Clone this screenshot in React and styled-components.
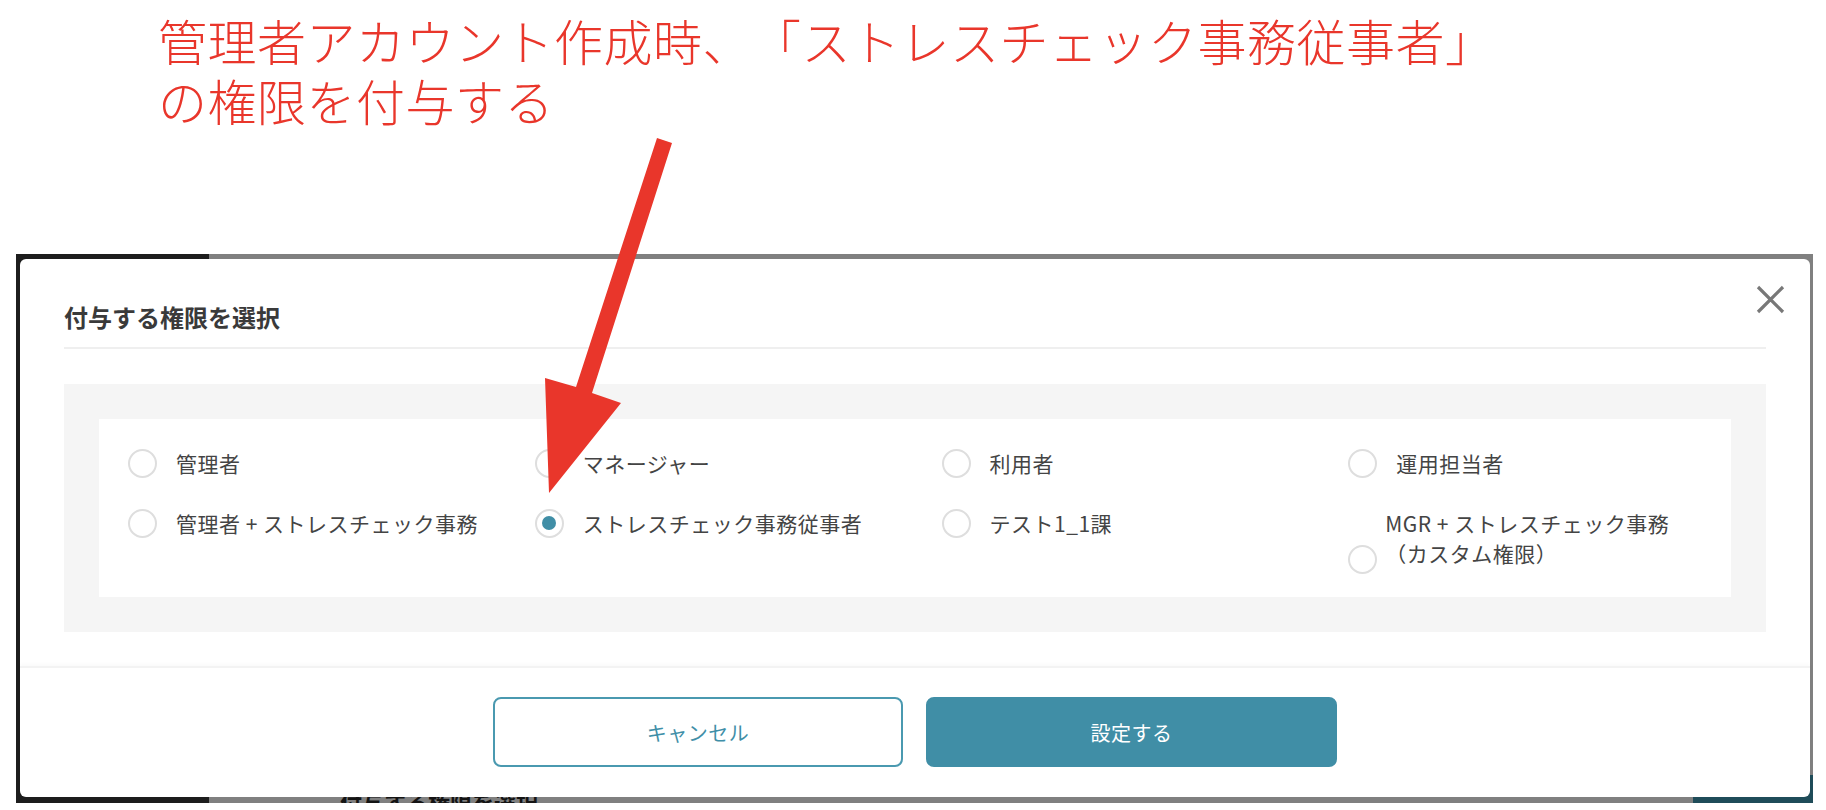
import React, { useState } from 'react';
import styled, { createGlobalStyle } from 'styled-components';

const GlobalStyle = createGlobalStyle`
  * {
    box-sizing: border-box;
  }

  html,
  body {
    margin: 0;
    padding: 0;
    background: #fff;
  }

  body {
    font-family: "Noto Sans CJK JP", "Noto Sans", sans-serif;
    text-spacing-trim: space-all;
  }
`;

// Page + annotation
const Page = styled.div`
  position: relative;
  width: 1826px;
  height: 810px;
  overflow: hidden;
  background: #fff;
`;

const Annotation = styled.p`
  margin: 0;
  height: 254px;
  padding: 10px 0 0 158px;
  font-size: 49px;
  line-height: 59.5px;
  letter-spacing: 0.5px;
  font-weight: 300;
  color: #e9362b;
  text-spacing-trim: space-all;
`;

const ArrowLayer = styled.svg`
  position: absolute;
  top: 0;
  left: 0;
  pointer-events: none;
`;

// The dimmed page behind the dialog
const Backdrop = styled.div`
  position: relative;
  width: 1797px;
  height: 549px;
  margin-left: 16px;
  padding: 5px 3px 6px 4px;
  overflow: hidden;
  background: linear-gradient(to right, #1d1d1d 193px, #808080 193px);
`;

const BehindLabel = styled.span`
  position: absolute;
  left: 324px;
  top: 534px;
  font-size: 22px;
  line-height: 26px;
  font-weight: 700;
  color: #141414;
`;

const BehindButton = styled.div`
  position: absolute;
  right: 0;
  bottom: 0;
  width: 120px;
  height: 28px;
  background: #1f4c59;
`;

// Dialog
const Modal = styled.div`
  position: relative;
  display: flex;
  flex-direction: column;
  height: 100%;
  background: #fff;
  border-radius: 6px;
`;

const Header = styled.div`
  padding: 40px 44px 0;
`;

const Title = styled.h2`
  margin: 0;
  padding-bottom: 12px;
  border-bottom: 2px solid #efefef;
  font-size: 24px;
  line-height: 36px;
  font-weight: 700;
  color: #3a3a3a;
`;

const CloseButton = styled.button`
  position: absolute;
  top: 26px;
  right: 25px;
  width: 29px;
  height: 29px;
  padding: 0;
  border: none;
  background: none;
  cursor: pointer;
`;

const Body = styled.div`
  padding: 35px 44px 34px;
`;

const OptionsPanel = styled.div`
  padding: 35px;
  background: #f5f5f5;
`;

const OptionsGrid = styled.div`
  display: grid;
  grid-template-columns: repeat(4, 1fr);
  column-gap: 24px;
  row-gap: 30px;
  align-items: start;
  padding: 29px 0 29px 29px;
  background: #fff;
`;

const Option = styled.label`
  display: flex;
  align-items: ${(p) => (p.$wrapped ? 'flex-end' : 'center')};
  gap: ${(p) => (p.$wrapped ? '8px' : '19px')};
  font-size: 21px;
  line-height: 30px;
  letter-spacing: 0.5px;
  color: #444;
  cursor: pointer;
`;

const HiddenInput = styled.input`
  display: none;
`;

const RadioMark = styled.span`
  flex-shrink: 0;
  display: grid;
  place-items: center;
  width: 29px;
  height: 29px;
  margin-bottom: ${(p) => (p.$wrapped ? '-6px' : '0')};
  border: 2.5px solid #dedede;
  border-radius: 50%;
  background: #fff;

  &::after {
    content: '';
    display: ${(p) => (p.$checked ? 'block' : 'none')};
    width: 14px;
    height: 14px;
    border-radius: 50%;
    background: #408ea6;
  }
`;

const Footer = styled.div`
  display: flex;
  justify-content: center;
  gap: 23px;
  margin-top: auto;
  padding: 29px 0 30px;
  border-top: 2px solid #f3f3f3;
  box-shadow: 0 -2px 4px rgba(0, 0, 0, 0.025);
`;

const Button = styled.button`
  width: ${(p) => (p.$primary ? '411px' : '410px')};
  height: 70px;
  border-radius: 8px;
  border: 2px solid ${(p) => (p.$primary ? '#408ea6' : '#4a99b0')};
  background: ${(p) => (p.$primary ? '#408ea6' : '#fff')};
  color: ${(p) => (p.$primary ? '#fff' : '#3f8fa8')};
  font-family: inherit;
  font-size: 20px;
  letter-spacing: 0.5px;
  cursor: pointer;
`;

const ROLES = [
  { id: 'admin', lines: ['管理者'] },
  { id: 'manager', lines: ['マネージャー'] },
  { id: 'user', lines: ['利用者'] },
  { id: 'operator', lines: ['運用担当者'] },
  { id: 'admin-stress', lines: ['管理者 + ストレスチェック事務'] },
  { id: 'stress', lines: ['ストレスチェック事務従事者'] },
  { id: 'test', lines: ['テスト1_1課'] },
  { id: 'mgr-stress', lines: ['MGR + ストレスチェック事務', '（カスタム権限）'] },
];

const App = () => {
  const [selected, setSelected] = useState('stress');

  return (
    <Page>
      <GlobalStyle />
      <Annotation>
        管理者アカウント作成時、「ストレスチェック事務従事者」
        <br />
        の権限を付与する
      </Annotation>

      <Backdrop>
        <BehindLabel>付与する権限を選択</BehindLabel>
        <BehindButton />
        <Modal>
          <CloseButton type="button" aria-label="閉じる">
            <svg width="29" height="29" viewBox="0 0 29 29">
              <path d="M2 2 L27 27 M27 2 L2 27" stroke="#787878" strokeWidth="3.2" fill="none" />
            </svg>
          </CloseButton>

          <Header>
            <Title>付与する権限を選択</Title>
          </Header>

          <Body>
            <OptionsPanel>
              <OptionsGrid>
                {ROLES.map((role) => {
                  const wrapped = role.lines.length > 1;
                  return (
                    <Option key={role.id} $wrapped={wrapped}>
                      <HiddenInput
                        type="radio"
                        name="role"
                        value={role.id}
                        checked={selected === role.id}
                        onChange={() => setSelected(role.id)}
                      />
                      <RadioMark $checked={selected === role.id} $wrapped={wrapped} />
                      <span>
                        {role.lines.map((line, i) => (
                          <React.Fragment key={i}>
                            {i > 0 && <br />}
                            {line}
                          </React.Fragment>
                        ))}
                      </span>
                    </Option>
                  );
                })}
              </OptionsGrid>
            </OptionsPanel>
          </Body>

          <Footer>
            <Button type="button">キャンセル</Button>
            <Button type="button" $primary>
              設定する
            </Button>
          </Footer>
        </Modal>
      </Backdrop>

      <ArrowLayer width="1826" height="810" viewBox="0 0 1826 810">
        <polygon
          points="657,138 672,143 592,393 621,403 549,493 545,378 576,387"
          fill="#e9362b"
        />
      </ArrowLayer>
    </Page>
  );
};

export default App;
